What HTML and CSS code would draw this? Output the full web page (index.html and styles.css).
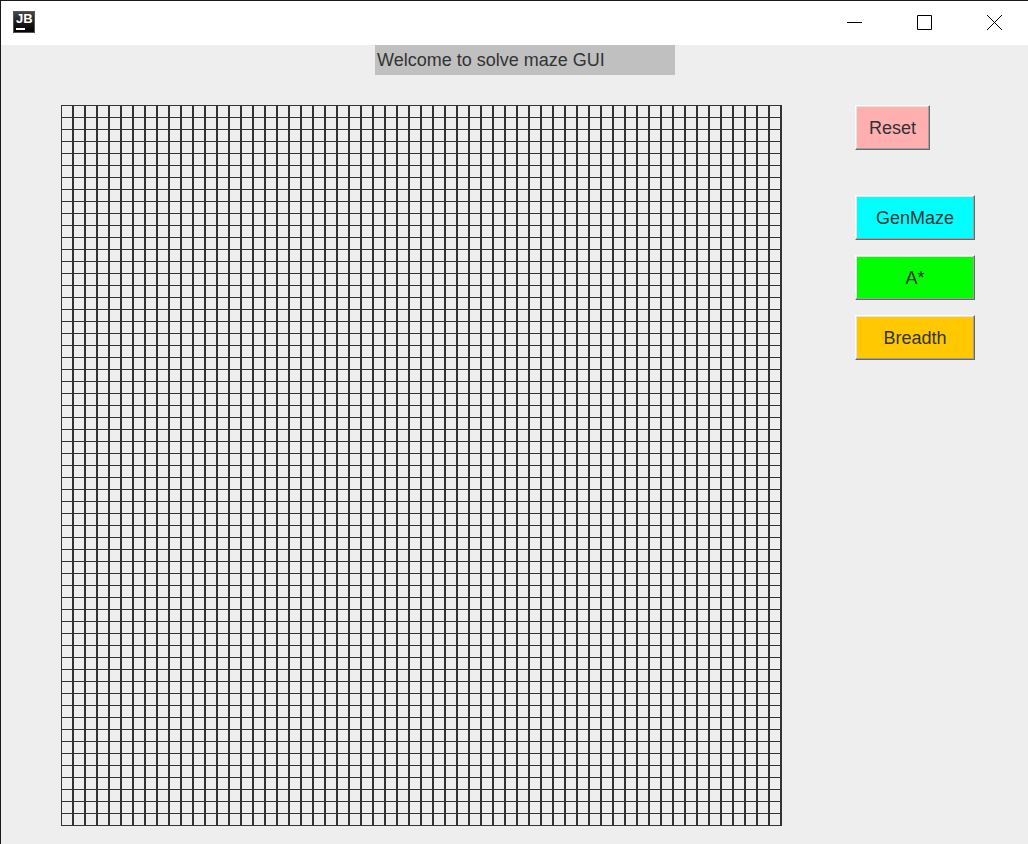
FILE: index.html
```html
<!DOCTYPE html>
<html lang="en">
<head>
<meta charset="utf-8">
<title>Solve maze GUI</title>
<link rel="stylesheet" href="styles.css">
</head>
<body>
<div class="window">
  <header class="titlebar">
    <svg class="logo" viewBox="0 0 22 22" role="img" aria-label="JB">
      <defs>
        <linearGradient id="shade" x1="0" y1="0" x2="0" y2="1">
          <stop offset="0" stop-color="#4a4a4a"/>
          <stop offset="0.5" stop-color="#1c1c1c"/>
          <stop offset="1" stop-color="#000"/>
        </linearGradient>
      </defs>
      <rect width="22" height="22" fill="url(#shade)"/>
      <rect x="0.5" y="0.5" width="21" height="21" fill="none" stroke="#555"/>
      <text class="logo-text" x="3" y="12">JB</text>
      <rect x="3" y="17" width="9" height="2" fill="#fff"/>
    </svg>
    <div class="controls">
      <button class="control" type="button" aria-label="Minimize">
        <svg class="glyph" viewBox="0 0 16 16"><path d="M0 7.5H15"/></svg>
      </button>
      <button class="control" type="button" aria-label="Maximize">
        <svg class="glyph" viewBox="0 0 16 16"><path d="M.5 .5H14.5V14.5H.5Z"/></svg>
      </button>
      <button class="control" type="button" aria-label="Close">
        <svg class="glyph" viewBox="0 0 16 16"><path d="M0 0L15 15M15 0L0 15"/></svg>
      </button>
    </div>
  </header>
  <main class="content">
    <h1 class="welcome">Welcome to solve maze GUI</h1>
    <div class="workspace">
      <div class="maze" role="img" aria-label="Empty maze grid"></div>
      <div class="actions">
        <button class="action reset" type="button">Reset</button>
        <button class="action generate" type="button">GenMaze</button>
        <button class="action astar" type="button">A*</button>
        <button class="action breadth" type="button">Breadth</button>
      </div>
    </div>
  </main>
</div>
</body>
</html>
```
FILE: styles.css
```css
* {
  box-sizing: border-box;
}

body {
  margin: 0;
  font-family: "Liberation Sans", Arial, sans-serif;
  font-size: 18px;
  color: #333;
}

.window {
  min-height: 100vh;
  border-top: 1px solid #18181a;
  border-left: 1px solid #18181a;
  background: #eee;
}

.titlebar {
  display: flex;
  align-items: center;
  justify-content: space-between;
  height: 44px;
  padding-left: 12px;
  background: #fff;
}

.logo {
  width: 22px;
  height: 22px;
  margin-bottom: 2px;
}

.logo-text {
  font-size: 13px;
  font-weight: bold;
  fill: #fff;
}

.controls {
  display: flex;
  gap: 4px;
}

.control {
  display: flex;
  align-items: center;
  justify-content: center;
  width: 66px;
  height: 44px;
  padding: 0;
  border: 0;
  background: transparent;
}

.glyph {
  width: 16px;
  height: 16px;
  fill: none;
  stroke: #000;
  stroke-width: 1;
}

.welcome {
  width: 300px;
  height: 30px;
  margin: 0 0 30px 374px;
  padding: 0 2px;
  background: #c0c0c0;
  font-size: 18px;
  font-weight: normal;
  line-height: 30px;
}

.workspace {
  display: flex;
  align-items: flex-start;
  gap: 73px;
  padding: 0 16px 18px 60px;
}

.maze {
  --line: #333;
  flex: none;
  width: 721px;
  aspect-ratio: 1;
  background-image:
    linear-gradient(var(--line) 1px, transparent 1px),
    linear-gradient(90deg, var(--line) 1px, transparent 1px 11px, var(--line) 11px);
  background-size: 12px 12px;
}

.actions {
  display: flex;
  flex-direction: column;
  gap: 15px;
}

.action {
  width: 120px;
  height: 45px;
  padding: 2px 0 0;
  border: 1px solid;
  border-color: #fff #696969 #696969 #fff;
  box-shadow: inset -1px -1px #a0a0a0, inset 1px 1px #e3e3e3;
  font: inherit;
  color: inherit;
}

.reset {
  width: 75px;
  margin-bottom: 30px;
  background: #ffafaf;
}

.generate {
  background: #0ff;
}

.astar {
  background: #0f0;
}

.breadth {
  background: #ffc800;
}
```
